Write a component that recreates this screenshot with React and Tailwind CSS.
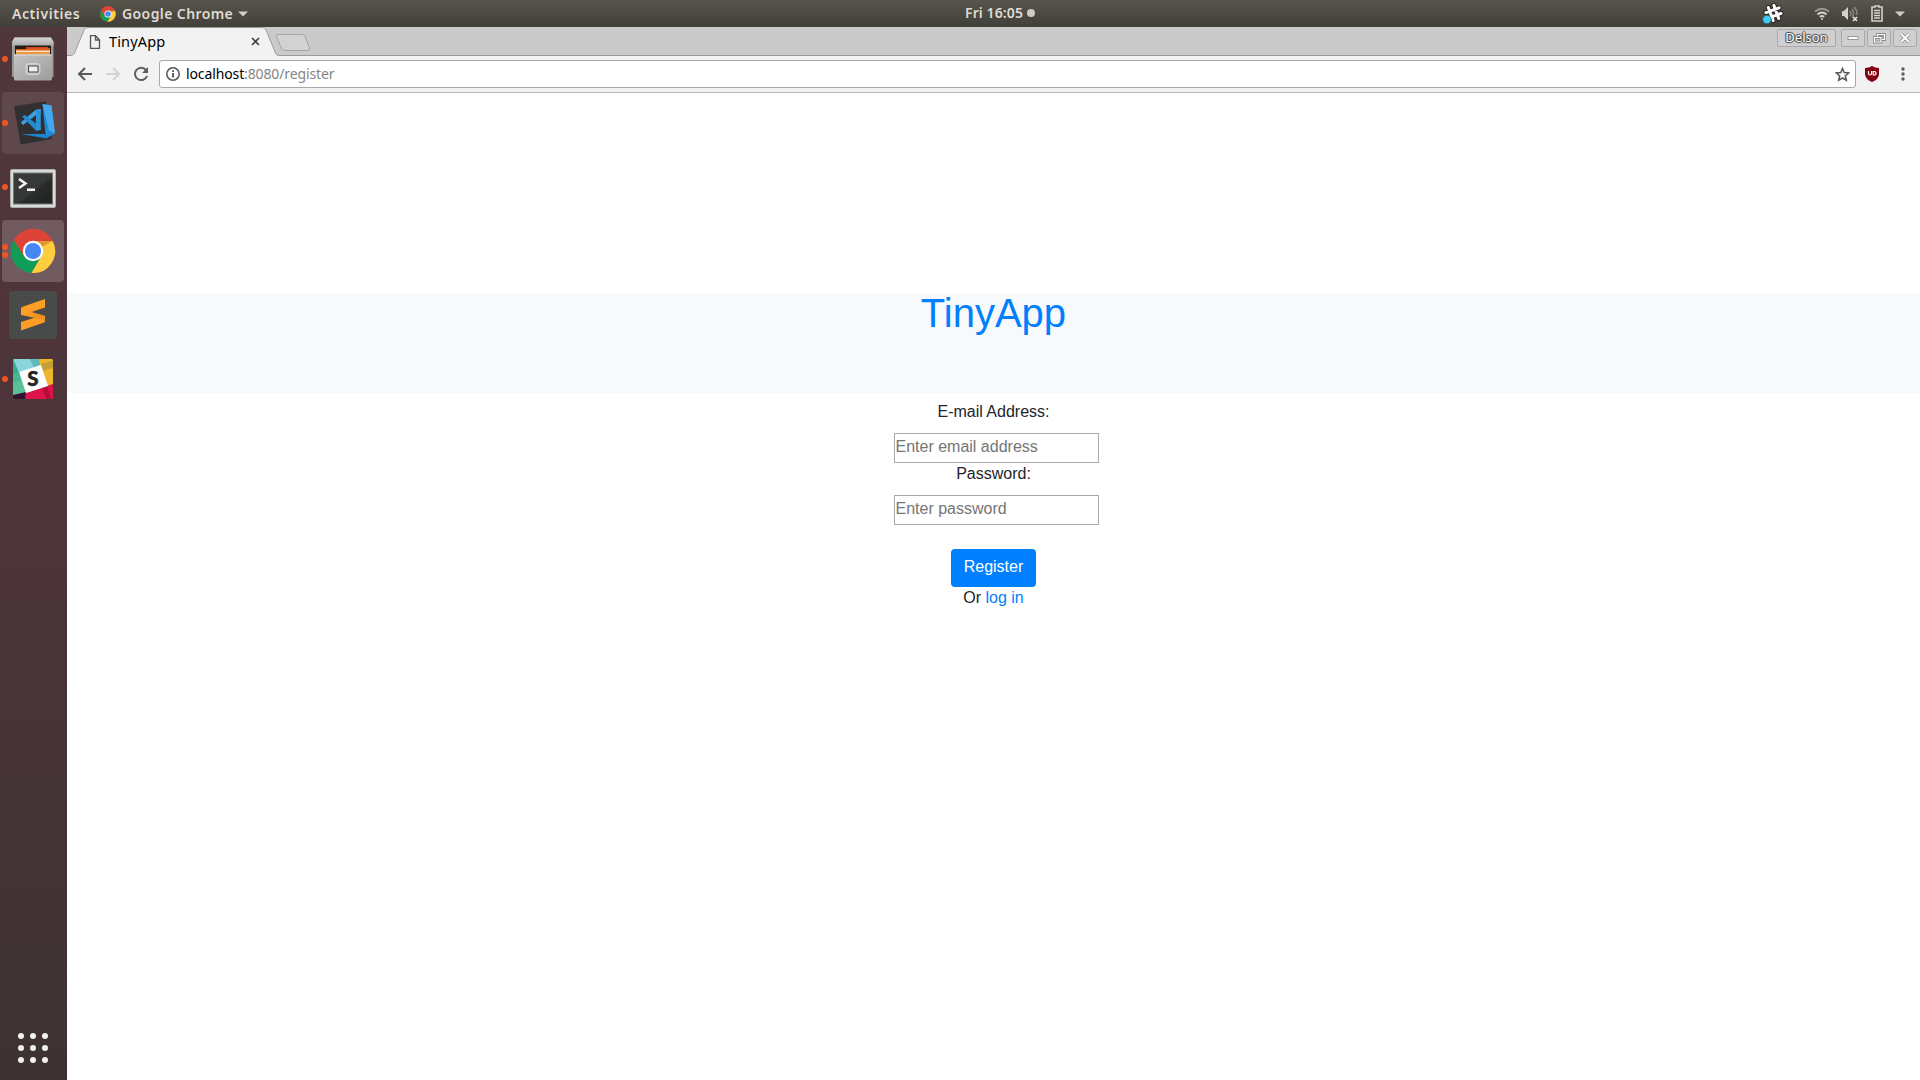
import React from "react";

const Dot = ({ className = "" }) => <span className={"block h-[6px] w-[6px] rounded-full bg-[#f05423] " + className} />;

function DockItem({ active = "", dots = 0, children }) {
  return (
    <div className="relative flex h-16 w-[67px] items-center justify-center">
      <div className={"ml-[-1px] flex h-[62px] w-[62px] items-center justify-center rounded-[4px] " + active}>{children}</div>
      <div className="absolute top-0 left-[2px] flex h-full flex-col justify-center gap-[2px]">
        {dots > 0 && <Dot />}
        {dots > 1 && <Dot />}
      </div>
    </div>
  );
}

function ChromeLogo({ size }) {
  return (
    <svg width={size} height={size} viewBox="0 0 48 48">
      <circle cx="24" cy="24" r="23" fill="#dc4437" />
      <path d="M4 12.5 A23 23 0 0 0 22.5 47 L32.5 30 L24 24 L14 29 Z" fill="#0f9d58" />
      <path d="M24 13.5 H44.5 A23 23 0 0 1 22.5 47 L33.5 28 Z" fill="#ffcd40" />
      <path d="M4 12.5 L14.5 29 L24 13.5 H44.5 A23 23 0 0 0 4 12.5Z" fill="#dc4437" />
      <path d="M24 13.5 H44.5 L33 20Z" fill="#a83a22" opacity=".35" />
      <circle cx="24" cy="24" r="10.6" fill="#fff" />
      <circle cx="24" cy="24" r="8.4" fill="#4487f5" />
    </svg>
  );
}

const FilesIcon = () => (
  <svg width="44" height="46" viewBox="0 0 44 46">
    <defs>
      <linearGradient id="cab" x1="0" y1="0" x2="1" y2="1"><stop offset="0" stopColor="#c4c4c4" /><stop offset="1" stopColor="#9c9c9c" /></linearGradient>
      <linearGradient id="cabTop" x1="0" y1="0" x2="0" y2="1"><stop offset="0" stopColor="#d6d6d6" /><stop offset="1" stopColor="#a8a8a8" /></linearGradient>
    </defs>
    <path d="M3.500 1.500 H40 L42.500 6 V41 H1 V6Z" fill="#999" />
    <path d="M3.500 1.500 H40 L42.500 6 V10 H1 V6Z" fill="url(#cabTop)" />
    <rect x="4" y="9.500" width="36" height="10" fill="#241c1a" />
    <path d="M15 11 H37 V14 H15Z" fill="#c4481b" />
    <path d="M5 13 H17 L18 12 H39 V19 H5Z" fill="#d85a1e" />
    <path d="M5 14.500 H39 V16 H5Z" fill="#fce3bd" />
    <path d="M5 16 H39 V19 H5Z" fill="#e89a43" />
    <path d="M3 18.500 H41 V43 Q41 44.500 39.500 44.500 H4.500 Q3 44.500 3 43Z" fill="url(#cab)" />
    <path d="M3 19 H41" stroke="#ddd" />
    <rect x="15" y="27.500" width="14" height="11" rx="2.500" fill="#c8c8c8" stroke="#d4d4d4" />
    <rect x="17.500" y="30" width="9.500" height="6" fill="#eee" stroke="#444" />
  </svg>
);

const CodeIcon = () => (
  <svg width="62" height="62" viewBox="0 0 62 62">
    <path d="M12 14.300 L44 9.300 L50 47 L18.700 52.500Z" fill="#303033" />
    <path d="M18.700 42 L43 42 L45 46.500 Z" fill="#1b86d0" />
    <path d="M40.500 12 L43.500 42 L44.500 46.300 L53 41.500 L49.500 13.500Z" fill="#1f8ad6" />
    <path d="M40.500 12 L49.500 13.500 L53 41.500 L47 38.500Z" fill="#45a8ec" />
    <path d="M18.700 30.500 L33.500 18 L38.700 17 V22 L34 23 L21 33Z" fill="#3ba0e4" />
    <path d="M20 24.500 L23 23 L38.700 35 V38 L34 38.500Z" fill="#2489ca" />
    <path d="M34 18 L38.700 17 V38 L34 38.500Z" fill="#2b93d6" />
  </svg>
);

const TerminalIcon = () => (
  <svg className="mt-[2px]" width="46" height="39" viewBox="0 0 46 39">
    <defs><linearGradient id="term" x1="0" y1="0" x2="1" y2="1"><stop offset="0" stopColor="#3a3c3b" /><stop offset=".55" stopColor="#363837" /><stop offset=".56" stopColor="#2b2d2c" /><stop offset="1" stopColor="#202221" /></linearGradient></defs>
    <rect x=".5" y=".5" width="45" height="38" rx="1.500" fill="#d9dada" stroke="#aaaead" />
    <rect x="3" y="3.500" width="40" height="32" fill="#777" />
    <rect x="4" y="4.500" width="38" height="30" fill="url(#term)" />
    <path d="M9 10 L15.500 14.500 L9 19" fill="none" stroke="#f4f4f4" strokeWidth="2.500" />
    <rect x="17" y="19.500" width="8" height="2.500" fill="#f4f4f4" />
  </svg>
);

const SublimeIcon = () => (
  <svg width="48" height="48" viewBox="0 0 48 48">
    <rect width="48" height="48" rx="3" fill="#494b4b" />
    <path d="M12 24 V17.500 Q12 16.500 13 16 L36 8 V16.500 L22.500 21 L36 25 V30 Q36 31 35 31.500 L12 39.500 V31 L25.500 26.800Z" fill="#ff9e25" />
    <path d="M22.500 21 L36 25 V30 L25.500 26.800Z" fill="#e9881a" opacity=".6" />
  </svg>
);

const SlackIcon = () => (
  <svg width="40" height="40" viewBox="0 0 40 40">
    <defs><clipPath id="slackClip"><rect width="40" height="40" rx="1.500" /></clipPath></defs>
    <g clipPath="url(#slackClip)">
      <rect width="40" height="40" fill="#5bbf9a" />
      <path d="M0 0 H26 L28 7 L6 14Z" fill="#8ad4db" />
      <path d="M0 0 L6 14 L0 16Z" fill="#35ad8b" />
      <path d="M17 0 H29 L30 4 L21 9Z" fill="#5fb9ba" />
      <path d="M26 0 H40 V25 L34 27 L27 6Z" fill="#efb52b" />
      <path d="M28 5 L40 1.500 V9 L30 12Z" fill="#c5a03a" />
      <path d="M13 34 L40 25 V40 H11Z" fill="#dd1449" />
      <path d="M29 28 L34 26 L38 40 H33Z" fill="#b50d3a" />
      <path d="M0 36 L13 33 L12 40 H0Z" fill="#321331" />
      <path d="M6 13 L28 6 L35 27 L13 34Z" fill="#fff" />
      <path d="M0 15 L6 13 L8 21 L0 24Z" fill="#49b68f" />
    </g>
    <text x="20" y="27" textAnchor="middle" fontFamily="Lato, sans-serif" fontWeight="900" fontSize="20.500" fill="#242424" stroke="#242424" strokeWidth=".5">S</text>
  </svg>
);

function Dock() {
  return (
    <aside className="flex w-[67px] shrink-0 flex-col bg-linear-to-b from-[#50373b] via-[#4b343a] to-[#3d3233]">
      <DockItem dots={1}><FilesIcon /></DockItem>
      <DockItem dots={1} active="bg-[#5f484c]"><CodeIcon /></DockItem>
      <DockItem dots={1}><TerminalIcon /></DockItem>
      <DockItem dots={2} active="bg-[#715b60]"><ChromeLogo size={46} /></DockItem>
      <DockItem><SublimeIcon /></DockItem>
      <DockItem dots={1}><SlackIcon /></DockItem>
      <div className="mt-auto mb-[17px] ml-[18px] grid w-[30px] grid-cols-3 gap-[6px]">
        {Array.from({ length: 9 }, (_, i) => <span key={i} className="h-[6px] w-[6px] rounded-full bg-[#f2f1f0]" />)}
      </div>
    </aside>
  );
}

function SystemBar() {
  return (
    <header className="grid h-[27px] grid-cols-3 items-center bg-linear-to-b from-[#58554c] to-[#413f3a] font-['Noto_Sans',sans-serif] text-[14px] leading-[26px] font-semibold text-[#dfdbd2]">
      <div className="flex items-center pl-3">
        <span className="w-[68px] whitespace-nowrap tracking-[0.58px]">Activities</span>
        <span className="ml-5"><ChromeLogo size={16} /></span>
        <span className="ml-[6px] w-[111px] whitespace-nowrap tracking-[0.4px]">Google Chrome</span>
        <svg className="ml-[5px]" width="10" height="6"><path d="M0 .5H10L5 5.500Z" fill="#d0cdc5" /></svg>
      </div>
      <div className="flex items-center pl-[325px]">
        <span className="-mt-px w-[58px] whitespace-nowrap tracking-[0.1px]">Fri 16:05</span>
        <span className="ml-[4px] h-2 w-2 -mt-px rounded-full bg-[#cfccc5]" />
      </div>
      <div className="flex items-center justify-end pr-[15px]">
        <svg width="24" height="24" viewBox="0 0 24 24" strokeLinecap="round">
          <g transform="rotate(-20 13.500 11)">
            <path d="M10.500 4V18M16.500 4V18M6.500 8H20.500M6.500 14H20.500" stroke="#262522" strokeWidth="5" />
            <path d="M10.500 4V18M16.500 4V18M6.500 8H20.500M6.500 14H20.500" stroke="#fff" strokeWidth="3" />
          </g>
          <circle cx="7" cy="17.500" r="4.300" fill="#3ccdf5" stroke="#37545c" strokeWidth=".8" />
        </svg>
        <svg className="ml-[30px]" width="16" height="14" viewBox="0 0 16 14" fill="none" stroke="#d5d2cb" strokeWidth="2">
          <path d="M1 4.500Q8-1 15 4.500" stroke="#99968e" /><path d="M3.500 7.500Q8 3.500 12.500 7.500" /><path d="M6 10Q8 8 10 10" /><circle cx="8" cy="12" r="1" fill="#d5d2cb" stroke="none" />
        </svg>
        <svg className="ml-[11px]" width="18" height="16" viewBox="0 0 18 16">
          <path d="M1 5H3L7 1V14L3 10H1Z" fill="#d5d2cb" /><path d="M9 5Q11 7.500 9 10M11 3Q14 7 11.500 11M13 1Q17 5 15.500 9" fill="none" stroke="#8a877f" strokeWidth="1.500" /><path d="M12 11L16 15M16 11L12 15" stroke="#e5e2db" strokeWidth="1.700" />
        </svg>
        <svg className="ml-[12px]" width="12" height="17" viewBox="0 0 12 17">
          <path d="M4 2V1H8V2H11V16H1V2Z" fill="none" stroke="#d5d2cb" strokeWidth="1.600" /><path d="M3 5.500H9M3 8H9M3 10.500H9M3 13H9" stroke="#d5d2cb" strokeWidth="1.500" />
        </svg>
        <svg className="ml-[12px]" width="10" height="6"><path d="M0 .5H10L5 5.500Z" fill="#d0cdc5" /></svg>
      </div>
    </header>
  );
}

const WindowButton = ({ className = "", children }) => (
  <div className={"flex h-[18px] w-[24px] items-center justify-center rounded-[2px] border border-[#a9a9a9] bg-[#cfcfcf] " + className}>{children}</div>
);

function TabStrip() {
  return (
    <div className="relative flex h-[29px] items-start bg-[#cacaca]">
      <svg className="absolute top-0 left-0" width="1853" height="29" viewBox="0 0 1853 29">
        <path d="M0 28.500H3Q6 28.500 7.500 26L17 3Q18.500 .5 21 .5H195Q198 .5 199 3L208.500 26Q210 28.500 212 28.500V29H0Z" fill="#f2f2f2" />
        <path d="M0 28.500H4Q6 28.500 7.500 26L17 3Q18.500 .5 21 .5H195Q198 .5 199 3L208.500 26Q209.500 28.500 212 28.500H1853" fill="none" stroke="#9c9c9c" />
        <path d="M211 7.500H235Q237 7.500 238 9L242.500 21Q243.500 23.500 241 23.500H218Q215.500 23.500 214.500 21.500L209.500 9.500Q209 7.500 211 7.500Z" fill="#d2d2d2" stroke="#a5a5a5" />
      </svg>
      <div className="relative flex h-[29px] w-[212px] items-center pl-[22px] font-['Noto_Sans',sans-serif] text-[14px] text-black">
        <svg width="12" height="14" viewBox="0 0 12 14" fill="none" stroke="#555" strokeWidth="1.300"><path d="M1.500 .7H6.500L10.500 5V13.300H1.500ZM6.500 .7V5H10.500" /></svg>
        <span className="ml-[8px] w-[56px] text-[14.500px] tracking-[0.15px]">TinyApp</span>
        <svg className="ml-[86px]" width="9" height="9" viewBox="0 0 9 9"><path d="M1 1L8 8M8 1L1 8" stroke="#444" strokeWidth="1.700" /></svg>
      </div>
      <div className="relative mt-[2px] mr-[3px] ml-auto flex gap-[2px]">
        <div className="mr-[3px] flex h-[18px] w-[59px] items-center justify-center rounded-[2px] border border-[#a9a9a9] bg-[#cfcfcf] font-['Noto_Sans',sans-serif] text-[13px] text-white [text-shadow:1px_0_1px_#444,-1px_0_1px_#444,0_1px_1px_#444,0_-1px_1px_#444]">Delson</div>
        <WindowButton><svg width="12" height="6"><rect x="1" y="1.500" width="10" height="3" fill="#fff" stroke="#999" /></svg></WindowButton>
        <WindowButton><svg width="13" height="11" viewBox="0 0 13 11" fill="none"><path d="M4.500 3.500V1.500H11.500V6.500H9M1.500 4.500H8V9H1.500Z" stroke="#888" strokeWidth="2.800" /><path d="M4.500 3.500V1.500H11.500V6.500H9M1.500 4.500H8V9H1.500Z" stroke="#fff" strokeWidth="1.200" /></svg></WindowButton>
        <WindowButton><svg width="12" height="12" viewBox="0 0 12 12"><path d="M2 2L10 10M10 2L2 10" stroke="#888" strokeWidth="3.600" /><path d="M2 2L10 10M10 2L2 10" stroke="#fff" strokeWidth="2" /></svg></WindowButton>
      </div>
    </div>
  );
}

function Toolbar() {
  return (
    <div className="flex h-[37px] items-center border-b border-[#b5b5b5] bg-[#f2f2f2]">
      <svg className="ml-[10px]" width="16" height="14" viewBox="0 0 16 14" fill="none" stroke="#555a5e" strokeWidth="2"><path d="M15 7H2M8 1L2 7L8 13" /></svg>
      <svg className="ml-[12px]" width="16" height="14" viewBox="0 0 16 14" fill="none" stroke="#d3d3d3" strokeWidth="2"><path d="M1 7H14M8 1L14 7L8 13" /></svg>
      <svg className="ml-[12px]" width="16" height="16" viewBox="0 0 16 16"><path d="M13 4A6.200 6.200 0 1 0 14 10" fill="none" stroke="#5a5e62" strokeWidth="2" /><path d="M15 1V7H9Z" fill="#5a5e62" /></svg>
      <div className="ml-[10px] flex h-[28px] w-[1697px] items-center rounded-[3px] border border-[#a9a9a9] bg-white pl-[6px] font-['Noto_Sans',sans-serif] text-[14px]">
        <svg width="14" height="14" viewBox="0 0 14 14"><circle cx="7" cy="7" r="6.200" fill="none" stroke="#555" strokeWidth="1.500" /><path d="M7 6V10.500M7 3.200V4.900" stroke="#555" strokeWidth="1.800" /></svg>
        <span className="ml-[6px] w-[149px] pb-[2px] whitespace-nowrap tracking-[-0.12px] text-[#858585]"><span className="text-black">localhost</span>:8080/register</span>
        <svg className="mr-[5px] ml-auto" width="15" height="15" viewBox="0 0 15 15"><path d="M7.500 1.500L9.200 5.600L13.700 6L10.300 9L11.300 13.300L7.500 11L3.700 13.300L4.700 9L1.300 6L5.800 5.600Z" fill="none" stroke="#555" strokeWidth="1.500" /></svg>
      </div>
      <svg className="ml-[9px]" width="14" height="16" viewBox="0 0 14 16"><path d="M7 0Q10 2 14 2V8Q14 13 7 16Q0 13 0 8V2Q4 2 7 0Z" fill="#820010" /><path d="M3.500 5V7.500Q3.500 9 5 9Q6.500 9 6.500 7.500V5M8.200 5.500V9H9Q11 9 11 7.200Q11 5.500 9 5.500Z" fill="none" stroke="#fff" strokeWidth="1.200" /></svg>
      <svg className="ml-[22px]" width="4" height="14" viewBox="0 0 4 14" fill="#5a5e62"><circle cx="2" cy="2" r="1.700" /><circle cx="2" cy="7" r="1.700" /><circle cx="2" cy="12" r="1.700" /></svg>
    </div>
  );
}

const inputClass = "block h-[30px] w-[205px] border border-[#a9a9a9] bg-white px-px pb-[2px] text-[16px] leading-6 placeholder:text-[#757575] placeholder:opacity-100 ml-[5px] outline-none";

function RegisterPage() {
  return (
    <main className="flex-1 bg-white pt-[200px] font-['Liberation_Sans',sans-serif] text-[16px] leading-6 text-[#212529]">
      <div className="h-[100px] bg-[#f8f9fa] text-center text-[40px] leading-[40px] text-[#007fff]">TinyApp</div>
      <form className="flex flex-col items-center pt-[7px]">
        <label htmlFor="email">E-mail Address:</label>
        <input id="email" className={inputClass + " mt-[9px]"} placeholder="Enter email address" />
        <label htmlFor="password" className="-mt-px">Password:</label>
        <input id="password" className={inputClass + " mt-[9px]"} placeholder="Enter password" />
        <button type="button" className="mt-6 flex h-[38px] w-[85px] justify-center rounded-[4px] bg-[#007fff] pt-[6px] text-white">Register</button>
        <p className="-mt-px">Or <a className="text-[#007fff]">log in</a></p>
      </form>
    </main>
  );
}

export default function App() {
  return (
    <div className="flex h-screen w-screen flex-col overflow-hidden">
      <SystemBar />
      <div className="flex min-h-0 flex-1">
        <Dock />
        <div className="flex min-w-0 flex-1 flex-col">
          <TabStrip />
          <Toolbar />
          <RegisterPage />
        </div>
      </div>
    </div>
  );
}
